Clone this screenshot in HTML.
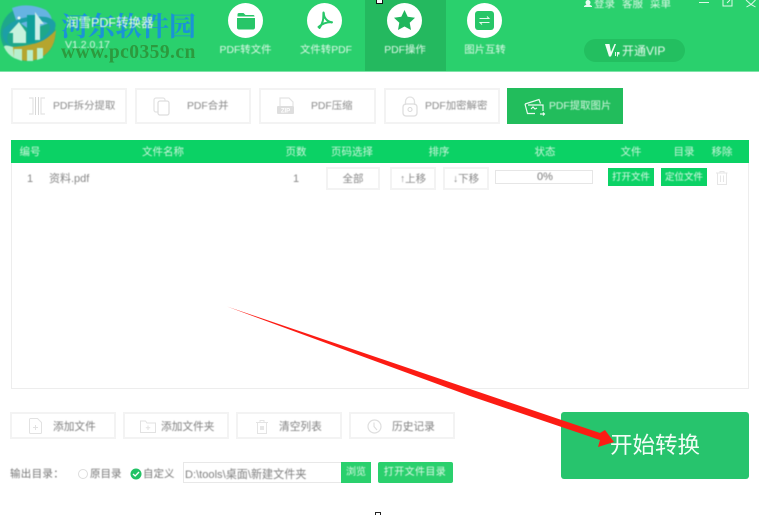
<!DOCTYPE html>
<html lang="zh">
<head>
<meta charset="utf-8">
<style>
html,body{margin:0;padding:0;width:759px;height:515px;overflow:hidden;background:#fff}
body{position:relative;font-family:"Liberation Sans","Noto Sans CJK SC",sans-serif;color:#777}
.a{position:absolute;white-space:nowrap}
.blur{filter:blur(.45px)}
.btn{position:absolute;box-sizing:border-box;background:#fff;border:2px solid #f3f3f3}
.t{position:absolute;white-space:nowrap;text-align:center;transform:translateX(-50%);filter:blur(.45px)}
svg{position:absolute;overflow:visible}
</style>
</head>
<body>
<!-- Header -->
<div class="a" style="left:0;top:0;width:759px;height:71px;background:#2ad06d"></div>
<div class="a" style="left:0;top:71px;width:759px;height:1px;background:#7fe3a8"></div>
<div class="a" style="left:365px;top:0;width:81px;height:71px;background:#24b95f"></div>
<div class="a" style="left:376px;top:0;width:5px;height:3px;border:1px solid #111;border-top:0;background:#fff"></div>

<!-- Logo -->
<svg style="left:0;top:0;filter:blur(.5px)" width="70" height="70" viewBox="0 0 70 70">
  <circle cx="28" cy="33.500" r="27.500" fill="#1ea88a"/>
  <path d="M4 47A27.500 27.500 0 0 0 55 38L56 30Q40 48 4 47Z" fill="#b5a52e"/>
  <path d="M12 8Q28 2 46 10Q52 15 52 22L30 30 16 20Z" fill="#66b3e2"/>
  <path d="M3 30Q16 14 46 17Q58 20 55 28Q50 40 33 44Q48 36 50 28Q50 22 40 21Q18 19 8 34Q5 42 12 47Q1 42 3 30Z" fill="#1c9fa6"/>
  <path d="M13 43V33H9L19 22 26 32V43Z" fill="#c6f2dd"/>
  <path d="M27 15H35V43H27Z" fill="#0e9f9a"/>
  <path d="M35 12 44 24H40V40H35Z" fill="#cdeee8"/>
  <path d="M13 47Q4 44 4 47Q7 54 14 58ZM14 49H22V61L14 58ZM27 50H33V61H27ZM37 48H43V58L37 60Z" fill="#b8efce"/>
  <circle cx="19" cy="18" r="1.500" fill="#eefcf5"/>
</svg>
<div class="a" style="left:61px;top:9px;font-family:'Noto Serif CJK SC','Liberation Serif',serif;font-size:27px;line-height:32px;font-weight:700;color:#1a93d6">河东软件园</div>
<div class="a blur" style="left:66px;top:14px;font-size:12.500px;line-height:18px;color:#e6faee">润雪PDF转换器</div>
<div class="a blur" style="left:65px;top:38px;font-size:10.500px;line-height:14px;color:#d9f6e4">V1.2.0.17</div>
<div class="a" style="left:61px;top:42px;font-family:'Liberation Serif',serif;font-size:19.500px;line-height:22px;font-weight:700;color:#2c9a3e;letter-spacing:.45px">www.pc0359.cn</div>

<!-- Nav icons -->
<svg style="left:228px;top:3px" width="35" height="35" viewBox="0 0 35 35">
  <circle cx="17.500" cy="17.500" r="17.500" fill="#fff"/>
  <path d="M9.500 11.500a1.500 1.500 0 0 1 1.500-1.500h4.500l2 2h8a1.500 1.500 0 0 1 1 1v.500H9.500Z" fill="#27c668"/>
  <path d="M9 15H27V24.500a2 2 0 0 1-2 2H11a2 2 0 0 1-2-2Z" fill="#27c668"/>
</svg>
<svg style="left:307px;top:3px" width="35" height="35" viewBox="0 0 35 35">
  <circle cx="17.500" cy="17.500" r="17.500" fill="#fff"/>
  <path d="M16.500 9.500c-.5 4 1 8-4 15.500M16.800 10c0 5 3 8 8 9.500M11.500 24c4-3.500 8-5 13.500-4.800" fill="none" stroke="#27c668" stroke-width="2" stroke-linecap="round"/>
</svg>
<svg style="left:387px;top:3px" width="35" height="35" viewBox="0 0 35 35">
  <circle cx="17.500" cy="17.500" r="17.500" fill="#fff"/>
  <path d="M17.500 7l3.200 6.700 7.300 1-5.300 5.100 1.300 7.200-6.500-3.500-6.500 3.500 1.300-7.200-5.300-5.100 7.300-1Z" fill="#1fb65c"/>
</svg>
<svg style="left:467px;top:3px" width="35" height="35" viewBox="0 0 35 35">
  <circle cx="17.500" cy="17.500" r="17.500" fill="#fff"/>
  <rect x="8" y="8" width="19" height="19" rx="3" fill="#27c668"/>
  <path d="M12.500 15.500H22l-2-2M22.500 19.500H13l2 2" fill="none" stroke="#e6f9ee" stroke-width="1"/>
</svg>
<div class="t" style="left:245.500px;top:43px;font-size:10.400px;line-height:15px;color:#dff8e8">PDF转文件</div>
<div class="t" style="left:326px;top:43px;font-size:10.400px;line-height:15px;color:#dff8e8">文件转PDF</div>
<div class="t" style="left:405px;top:43px;font-size:10.400px;line-height:15px;color:#dff8e8">PDF操作</div>
<div class="t" style="left:485px;top:43px;font-size:10.400px;line-height:15px;color:#dff8e8">图片互转</div>

<!-- Top right -->
<svg style="left:583px;top:0" width="10" height="8" viewBox="0 0 10 8"><path d="M5 0a2.500 2.500 0 0 1 2.500 2.500Q7.500 4 6.500 4.500L9 6V7H1V6l2.500-1.500Q2.500 4 2.500 2.500A2.500 2.500 0 0 1 5 0Z" fill="#e8fbf0"/></svg>
<div class="a blur" style="left:594px;top:-3px;font-size:10.500px;line-height:14px;color:#dff8e8">登录</div>
<div class="a blur" style="left:622px;top:-3px;font-size:10.500px;line-height:14px;color:#dff8e8">客服</div>
<div class="a blur" style="left:650px;top:-3px;font-size:10.500px;line-height:14px;color:#dff8e8">菜单</div>
<div class="a" style="left:699px;top:2px;width:10px;height:1px;background:#dff8e8"></div>
<svg style="left:722px;top:0" width="34" height="8" viewBox="0 0 34 8"><path d="M1 0V6H10V0M8 0 5 3" fill="none" stroke="#dff8e8" stroke-width="1"/><path d="M24 0 29 4.500 33.500 0M24.500 7 29 4.500 33.500 7" fill="none" stroke="#dff8e8" stroke-width="1"/></svg>

<!-- VIP -->
<div class="a" style="left:584px;top:39px;width:101px;height:23px;border-radius:12px;background:#23bf60"></div>
<svg style="left:605px;top:44px" width="16" height="13" viewBox="0 0 16 13"><path d="M0 0H4.500L6 8 9.500 0H11L6 12.500H4Z" fill="#f2fdf6"/><path d="M10 8h1v4h-1zM12 8h2.500v2.500H13v2h-1z" fill="#e4f9ec"/></svg>
<div class="a blur" style="left:622px;top:43px;font-size:12px;line-height:16px;color:#e6faee">开通VIP</div>

<!-- Function tabs -->
<div class="btn" style="left:11px;top:88px;width:116px;height:36px"></div>
<div class="btn" style="left:135px;top:88px;width:116px;height:36px"></div>
<div class="btn" style="left:259px;top:88px;width:117px;height:36px"></div>
<div class="btn" style="left:384px;top:88px;width:116px;height:36px"></div>
<div class="a" style="left:507px;top:88px;width:116px;height:36px;background:#22bd5c"></div>

<svg style="left:28px;top:97px" width="18" height="18" viewBox="0 0 18 18"><path d="M1 1H5V17H1M17 1H13V17H17" fill="none" stroke="#e4e4e4" stroke-width="1.200"/><path d="M7.500 0V18M10.500 0V18" stroke="#d8d8d8" stroke-width="1"/></svg>
<svg style="left:153px;top:97px" width="17" height="19" viewBox="0 0 17 19"><rect x="1" y="1" width="11" height="14" rx="2" fill="none" stroke="#e4e4e4" stroke-width="1.300"/><rect x="5" y="4" width="11" height="14" rx="2" fill="#fff" stroke="#dedede" stroke-width="1.300"/></svg>
<svg style="left:277px;top:97px" width="18" height="19" viewBox="0 0 18 19"><path d="M3 9V1H12L16 5V9" fill="none" stroke="#e4e4e4" stroke-width="1.200"/><rect x="0" y="9" width="17" height="8" rx="1" fill="#dedede"/><text x="8.500" y="15.500" font-size="6" font-weight="700" fill="#fff" text-anchor="middle" font-family="Liberation Sans">ZIP</text></svg>
<svg style="left:402px;top:96px" width="16" height="21" viewBox="0 0 16 21"><path d="M3.500 9V5.500a4.500 4.500 0 0 1 9 0V9" fill="none" stroke="#e2e2e2" stroke-width="1.300"/><rect x="1" y="8" width="14" height="12" rx="3" fill="none" stroke="#dedede" stroke-width="1.300"/><circle cx="8" cy="13.500" r="2" fill="none" stroke="#dadada" stroke-width="1.100"/></svg>
<svg style="left:524px;top:98px" width="21" height="18" viewBox="0 0 21 18"><path d="M1 6 15 1.500 16.500 5.500M1 6 3.500 15.500H11M4 7H19V13M7 11l2-2 2 2 2-1M16 16H20.500M19 14.500 20.500 16 19 17.500" fill="none" stroke="#eafaf0" stroke-width="1.200"/></svg>

<div class="a blur" style="left:53px;top:99px;font-size:10.400px;line-height:16px;color:#8a8a8a">PDF拆分提取</div>
<div class="a blur" style="left:187px;top:99px;font-size:10.400px;line-height:16px;color:#8a8a8a">PDF合并</div>
<div class="a blur" style="left:311px;top:99px;font-size:10.400px;line-height:16px;color:#8a8a8a">PDF压缩</div>
<div class="a blur" style="left:425px;top:99px;font-size:10.400px;line-height:16px;color:#8a8a8a">PDF加密解密</div>
<div class="a blur" style="left:549px;top:99px;font-size:10.400px;line-height:16px;color:#d8f6e3">PDF提取图片</div>

<!-- Table -->
<div class="a" style="left:11px;top:140px;width:738px;height:249px;box-sizing:border-box;border:1px solid #ededed"></div>
<div class="a" style="left:11px;top:140px;width:738px;height:23px;background:#0bd265"></div>
<div class="t" style="left:30px;top:145px;font-size:10.500px;line-height:15px;color:#cdf5dc">编号</div>
<div class="t" style="left:163px;top:145px;font-size:10.500px;line-height:15px;color:#cdf5dc">文件名称</div>
<div class="t" style="left:296px;top:145px;font-size:10.500px;line-height:15px;color:#cdf5dc">页数</div>
<div class="t" style="left:352px;top:145px;font-size:10.500px;line-height:15px;color:#cdf5dc">页码选择</div>
<div class="t" style="left:439px;top:145px;font-size:10.500px;line-height:15px;color:#cdf5dc">排序</div>
<div class="t" style="left:545px;top:145px;font-size:10.500px;line-height:15px;color:#cdf5dc">状态</div>
<div class="t" style="left:631px;top:145px;font-size:10.500px;line-height:15px;color:#cdf5dc">文件</div>
<div class="t" style="left:684px;top:145px;font-size:10.500px;line-height:15px;color:#cdf5dc">目录</div>
<div class="t" style="left:722px;top:145px;font-size:10.500px;line-height:15px;color:#cdf5dc">移除</div>

<div class="a blur" style="left:27px;top:172px;font-size:11px;line-height:15px;color:#888">1</div>
<div class="a blur" style="left:49px;top:172px;font-size:11px;line-height:15px;color:#888">资料.pdf</div>
<div class="a blur" style="left:293px;top:172px;font-size:11px;line-height:15px;color:#888">1</div>

<div class="btn" style="left:326px;top:167px;width:54px;height:23px"></div>
<div class="t" style="left:353px;top:172px;font-size:10.500px;line-height:15px;color:#888">全部</div>
<div class="btn" style="left:390px;top:167px;width:46px;height:23px"></div>
<div class="t" style="left:413px;top:172px;font-size:10.500px;line-height:15px;color:#888">↑上移</div>
<div class="btn" style="left:443px;top:167px;width:46px;height:23px"></div>
<div class="t" style="left:466px;top:172px;font-size:10.500px;line-height:15px;color:#888">↓下移</div>
<div class="a" style="left:495px;top:170px;width:98px;height:14px;box-sizing:border-box;border:1px solid #e6e6e6"></div>
<div class="t" style="left:545px;top:170px;font-size:11px;line-height:15px;color:#777">0%</div>
<div class="a" style="left:608px;top:168px;width:46px;height:18px;background:#0bd265"></div>
<div class="t" style="left:631px;top:171px;font-size:9.500px;line-height:14px;color:#e0f9ea">打开文件</div>
<div class="a" style="left:661px;top:168px;width:46px;height:18px;background:#0bd265"></div>
<div class="t" style="left:684px;top:171px;font-size:9.500px;line-height:14px;color:#e0f9ea">定位文件</div>
<svg style="left:716px;top:171px" width="12" height="14" viewBox="0 0 12 14"><path d="M0 2H11.500M4 2V.500H8V2M1.500 2V13.500H10.500V2M4.500 4.500V11M7.500 4.500V11" fill="none" stroke="#e6e6e6" stroke-width="1"/></svg>

<!-- Bottom buttons -->
<div class="btn" style="left:10px;top:412px;width:106px;height:27px"></div>
<div class="btn" style="left:123px;top:412px;width:106px;height:27px"></div>
<div class="btn" style="left:236px;top:412px;width:106px;height:27px"></div>
<div class="btn" style="left:349px;top:412px;width:106px;height:27px"></div>
<svg style="left:29px;top:418px" width="13" height="16" viewBox="0 0 13 16"><path d="M.500 1.500a1 1 0 0 1 1-1H8.500L12.500 4.500V14.500a1 1 0 0 1-1 1H1.500a1 1 0 0 1-1-1ZM6.500 7V12M4 9.500H9" fill="none" stroke="#e2e2e2" stroke-width="1"/></svg>
<svg style="left:140px;top:420px" width="16" height="13" viewBox="0 0 16 13"><path d="M.500 1H5.500L7 3H15.500V12.500H.500ZM8 5.500V10M5.800 7.700H10.200" fill="none" stroke="#e2e2e2" stroke-width="1"/></svg>
<svg style="left:256px;top:420px" width="12" height="14" viewBox="0 0 12 14"><path d="M0 2.500H12M4 2.500V.500H8V2.500M1.500 2.500V13.500H10.500V2.500" fill="none" stroke="#e4e4e4" stroke-width="1"/><rect x="4" y="6" width="4" height="4" fill="#e6e6e6"/></svg>
<svg style="left:367px;top:419px" width="15" height="15" viewBox="0 0 15 15"><circle cx="7.500" cy="7.500" r="6.500" fill="none" stroke="#dedede" stroke-width="1.200"/><path d="M7 3.500V7.500L10 11" fill="none" stroke="#dedede" stroke-width="1.100"/></svg>
<div class="a blur" style="left:53px;top:419px;font-size:10.700px;line-height:16px;color:#7f7f7f">添加文件</div>
<div class="a blur" style="left:161px;top:419px;font-size:10.700px;line-height:16px;color:#7f7f7f">添加文件夹</div>
<div class="a blur" style="left:279px;top:419px;font-size:10.700px;line-height:16px;color:#7f7f7f">清空列表</div>
<div class="a blur" style="left:392px;top:419px;font-size:10.700px;line-height:16px;color:#7f7f7f">历史记录</div>

<!-- Output row -->
<div class="a blur" style="left:10px;top:467px;font-size:10.500px;line-height:15px;color:#777;letter-spacing:.3px">输出目录：</div>
<div class="a" style="left:78px;top:469px;width:10px;height:10px;box-sizing:border-box;border:1px solid #ddd;border-radius:50%"></div>
<div class="a blur" style="left:90px;top:467px;font-size:10.500px;line-height:15px;color:#777">原目录</div>
<svg style="left:130px;top:468px" width="12" height="12" viewBox="0 0 12 12"><circle cx="6" cy="6" r="5.500" fill="#22c265"/><path d="M3 6 5.200 8 9 4" fill="none" stroke="#fff" stroke-width="1.300"/></svg>
<div class="a blur" style="left:143px;top:467px;font-size:10.500px;line-height:15px;color:#777">自定义</div>
<div class="a" style="left:183px;top:462px;width:158px;height:21px;box-sizing:border-box;border:1px solid #e8e8e8;border-right:0"></div>
<div class="a blur" style="left:185px;top:468px;font-size:11.100px;line-height:15px;color:#808080">D:\tools\桌面\新建文件夹</div>
<div class="a" style="left:341px;top:462px;width:30px;height:21px;background:#2ad06d"></div>
<div class="t" style="left:356px;top:466px;font-size:10px;line-height:14px;color:#dff8e8">浏览</div>
<div class="a" style="left:378px;top:462px;width:75px;height:21px;background:#2ad06d;border-radius:2px"></div>
<div class="t" style="left:415px;top:466px;font-size:10px;line-height:14px;letter-spacing:.4px;color:#dff8e8">打开文件目录</div>

<!-- Start button -->
<div class="a" style="left:561px;top:412px;width:188px;height:67px;background:#27c46d;border-radius:3px"></div>
<div class="t" style="left:655px;top:431px;font-size:22.500px;line-height:30px;color:#f2fdf6;filter:none">开始转换</div>

<!-- Arrow -->
<svg style="left:0;top:0" width="759" height="515" viewBox="0 0 759 515">
  <path d="M227 306.500 L470 389 L600 433 L605 430 L614 442 L598 447 L600 440 L470 396 Z" fill="#fc1c14"/>
</svg>
<div class="a" style="left:375px;top:512px;width:6px;height:3px;box-sizing:border-box;border:1px solid #222;border-bottom:0"></div>
</body>
</html>
